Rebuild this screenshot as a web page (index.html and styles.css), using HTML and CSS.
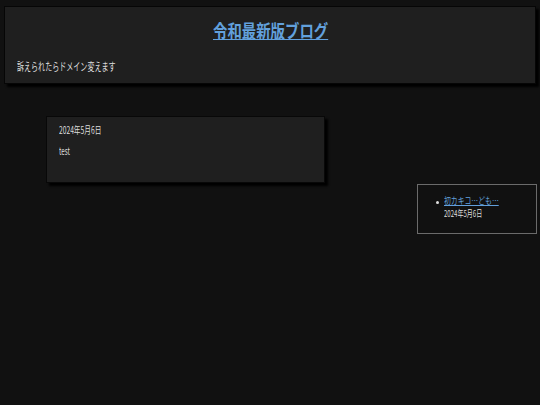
FILE: index.html
```html
<!DOCTYPE html>
<html lang="ja">
<head>
<meta charset="utf-8">
<title>令和最新版ブログ</title>
<link rel="stylesheet" href="styles.css">
</head>
<body>
<header class="header">
  <h1 class="title"><a href="#" class="title-link"><span class="sx title-text">令和最新版ブログ</span></a></h1>
  <p class="tagline"><span class="sx tag-text">訴えられたらドメイン変えます</span></p>
</header>
<main class="main">
  <article class="card">
    <div class="date"><span class="sx date-text">2024年5月6日</span></div>
    <div class="body"><span class="sx body-text">test</span></div>
  </article>
  <aside class="side">
    <ul class="side-list">
      <li class="side-item">
        <a href="#" class="side-link"><span class="sx link-text">初カキコ…ども…</span></a>
        <div class="side-date"><span class="sx sdate-text">2024年5月6日</span></div>
      </li>
    </ul>
  </aside>
</main>
</body>
</html>
```
FILE: styles.css
```css
html, body {
  margin: 0;
  padding: 0;
}
body {
  background: #111111;
  color: #dcdcdc;
  font-family: "Noto Sans CJK JP", "Liberation Sans", sans-serif;
  width: 540px;
  height: 405px;
  overflow: hidden;
}
.sx {
  display: inline-block;
  white-space: nowrap;
  transform-origin: left center;
}
.header {
  box-sizing: border-box;
  margin: 6px 4px 0 4px;
  height: 78px;
  background: #1f1f1f;
  border: 1px solid #060606;
  box-shadow: 3px 3px 2px #000;
  padding-top: 13px;
}
.title {
  margin: 0;
  text-align: center;
  font-size: 18px;
  line-height: 20px;
  font-weight: bold;
}
.title-link {
  color: #62a0dc;
  text-decoration: underline;
  display: inline-block;
  width: 115px;
  text-align: left;
}
.title-text {
  transform: scaleX(0.8);
  text-decoration: underline;
}
.tagline {
  margin: 20px 0 0 12px;
  font-size: 11px;
  line-height: 12px;
  color: #dedede;
}
.tag-text {
  transform: scaleX(0.64);
}
.main {
  display: flex;
  align-items: flex-start;
  padding-left: 46px;
  margin-top: 32px;
}
.card {
  box-sizing: border-box;
  width: 279px;
  height: 67px;
  background: #1f1f1f;
  border: 1px solid #080808;
  box-shadow: 3px 3px 2px #000;
  padding: 7px 12px;
}
.date {
  font-size: 10px;
  line-height: 12px;
}
.date-text {
  transform: scaleX(0.67);
}
.body {
  margin-top: 9px;
  font-size: 10px;
  line-height: 12px;
}
.body-text {
  transform: scaleX(0.62);
}
.side {
  box-sizing: border-box;
  margin-left: 92px;
  margin-top: 68px;
  width: 120px;
  height: 50px;
  border: 1px solid #6b6b6b;
  padding: 10px 0 0 26px;
}
.side-list {
  margin: 0;
  padding: 0;
  list-style: none;
}
.side-item {
  position: relative;
}
.side-item::before {
  content: "";
  position: absolute;
  left: -8px;
  top: 6px;
  width: 3px;
  height: 3px;
  border-radius: 50%;
  background: #e0e0e0;
}
.side-link {
  display: block;
  color: #62a0dc;
  font-size: 9px;
  line-height: 12px;
  text-decoration: none;
}
.link-text {
  transform: scaleX(0.76);
  text-decoration: underline;
}
.side-date {
  margin-top: 1px;
  font-size: 9px;
  line-height: 11px;
}
.sdate-text {
  transform: scaleX(0.67);
}
```
